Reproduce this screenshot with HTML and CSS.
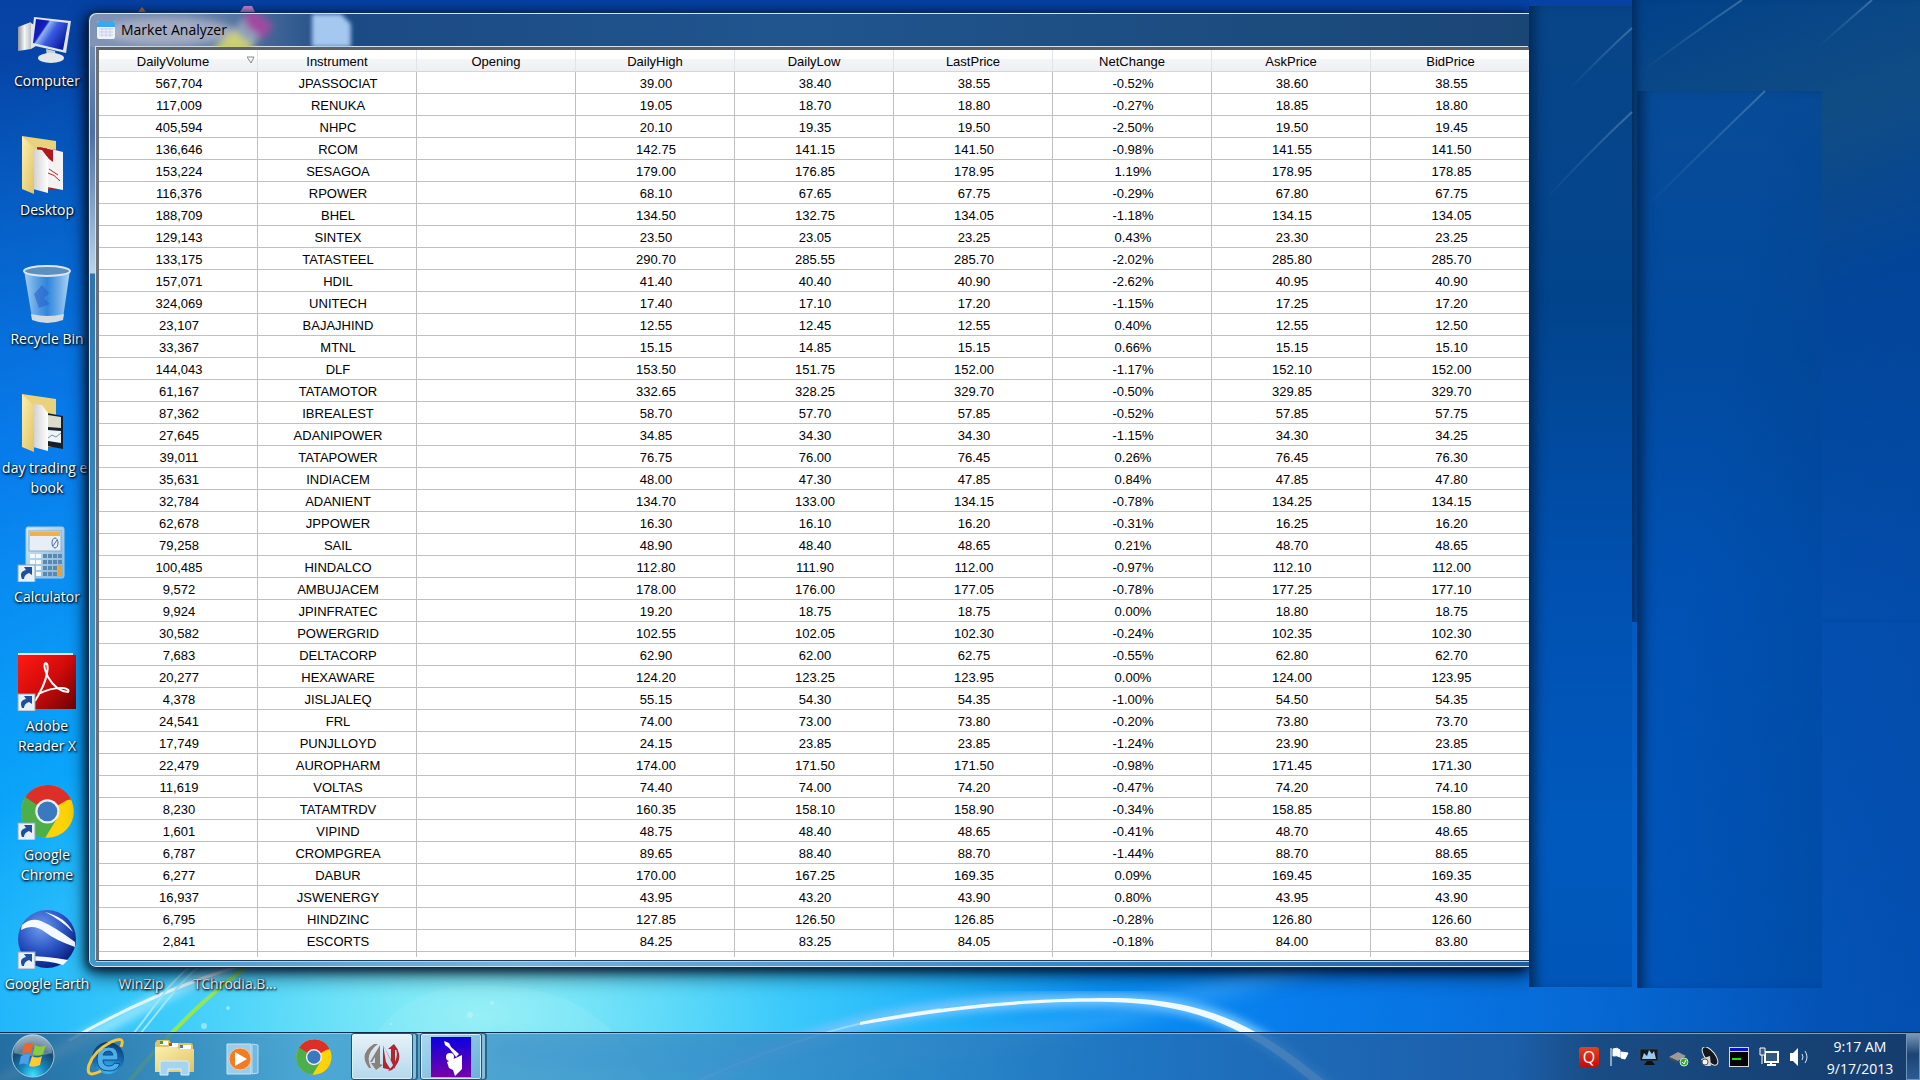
FILE: index.html
```html
<!DOCTYPE html>
<html lang="en">
<head>
  <meta charset="UTF-8">
  <meta name="viewport" content="width=device-width, initial-scale=1.0">
  <title>Market Analyzer</title>
  <link rel="stylesheet" href="styles.css">
</head>
<body>
  <svg class="defs" width="0" height="0" aria-hidden="true">
    <defs>
      <linearGradient id="screen" x1="0" y1="0" x2="1" y2=".6"><stop offset="0" stop-color="#0a12a8"/><stop offset=".35" stop-color="#1420c0"/><stop offset=".4" stop-color="#8fb4f4"/><stop offset=".6" stop-color="#3a5ae0"/><stop offset="1" stop-color="#0b1ca0"/></linearGradient>
      <linearGradient id="metal" x1="0" y1="0" x2="1" y2="0"><stop offset="0" stop-color="#8d949a"/><stop offset=".5" stop-color="#f4f6f7"/><stop offset="1" stop-color="#b9c0c6"/></linearGradient>
      <linearGradient id="manila" x1="0" y1="0" x2="1" y2="1"><stop offset="0" stop-color="#fbf0b0"/><stop offset="1" stop-color="#e2c262"/></linearGradient>
      <linearGradient id="page" x1="0" y1="0" x2="1" y2="0"><stop offset="0" stop-color="#cfcfcf"/><stop offset="1" stop-color="#ffffff"/></linearGradient>
      <linearGradient id="bin" x1="0" y1="0" x2="1" y2="0"><stop offset="0" stop-color="#b9dcf6" stop-opacity=".9"/><stop offset=".5" stop-color="#4b98e0" stop-opacity=".6"/><stop offset="1" stop-color="#cbe6fa" stop-opacity=".9"/></linearGradient>
      <linearGradient id="adobe" x1="0" y1="0" x2="1" y2="1"><stop offset="0" stop-color="#ff1a12"/><stop offset=".5" stop-color="#d20b0b"/><stop offset="1" stop-color="#6e0404"/></linearGradient>
      <linearGradient id="calc" x1="0" y1="0" x2="1" y2="1"><stop offset="0" stop-color="#d4ecf8"/><stop offset="1" stop-color="#7fb2d8"/></linearGradient>
      <radialGradient id="globe" cx=".4" cy=".3" r=".7"><stop offset="0" stop-color="#6e9cf0"/><stop offset=".6" stop-color="#2750c0"/><stop offset="1" stop-color="#0c2380"/></radialGradient>
      <radialGradient id="orb" cx=".5" cy=".95" r=".9"><stop offset="0" stop-color="#38e4ff"/><stop offset=".35" stop-color="#1583bb"/><stop offset=".7" stop-color="#17496f"/><stop offset="1" stop-color="#6f8ea6"/></radialGradient>
      <radialGradient id="ie" cx=".5" cy=".9" r=".9"><stop offset="0" stop-color="#37c4ff"/><stop offset=".6" stop-color="#1465b0"/><stop offset="1" stop-color="#0d3868"/></radialGradient>
      <linearGradient id="ninja" x1="0" y1="0" x2="0" y2="1"><stop offset="0" stop-color="#0a00e0"/><stop offset="1" stop-color="#7800a8"/></linearGradient>
      <linearGradient id="streak" x1="0" y1="1" x2="1" y2="0"><stop offset="0" stop-color="#4a84b4" stop-opacity="0"/><stop offset="1" stop-color="#5a8cb8" stop-opacity=".6"/></linearGradient>
      <filter id="soft"><feGaussianBlur stdDeviation="4"/></filter>
      <filter id="wide"><feGaussianBlur stdDeviation="9"/></filter>
      <g id="shortcut">
        <rect x="1" y="43" width="17" height="17" fill="#e9f1f8" stroke="#8fa6ba"/>
        <path d="M5 57c-2-5-1-8 4-9l-2-3h8v8l-3-2c-3 1-5 3-5 6z" fill="#1f4e9c"/>
      </g>
      <g id="chrome">
        <circle cx="24" cy="24" r="24" fill="#fcd209"/>
        <path d="M24 24L3.200 12A24 24 0 0 1 44.800 12z" fill="#dc2f27"/>
        <path d="M24 0A24 24 0 0 1 45.500 13.500H24z" fill="#dc2f27"/>
        <path d="M3.800 11A24 24 0 0 0 22 48L33 30 24 24z" fill="#4caf4a"/>
        <circle cx="24" cy="24" r="11" fill="#f1f1f1"/>
        <circle cx="24" cy="24" r="9" fill="#3a78c0"/>
      </g>
    </defs>
  </svg>

  <svg class="wallpaper" viewBox="0 0 1920 1080" preserveAspectRatio="none" aria-hidden="true">
    <path d="M350 1080C380 1010 420 985 480 985C560 985 610 1010 645 1080z" fill="#a8f0f8" opacity=".2"/>
    <g fill="none" stroke-linecap="round">
      <path d="M0 1080C110 1030 170 985 250 960" stroke="#8fe4ff" stroke-width="12" filter="url(#soft)"/>
      <path d="M70 1040C130 1005 180 985 250 962" stroke="#dff8ff" stroke-width="3"/>
      <path d="M133 1034C155 1008 165 985 196 962M140 1034C162 1008 180 980 205 962" stroke="#9ce8fb" stroke-width="2"/>
      <path d="M130 1080C180 1020 215 990 255 960" stroke="#8fe85a" stroke-width="4"/>
      <path d="M700 1080C860 1010 960 1000 1110 1000C1220 1000 1270 1040 1330 1090" stroke="#6fc4ff" stroke-width="14" filter="url(#soft)"/>
      <path d="M700 1080C800 1036 860 1020 940 1009" stroke="#8fdcff" stroke-width="2"/>
      <path d="M500 1050C800 1080 1060 1050 1340 950" stroke="#52b4ff" stroke-width="16" opacity=".5" filter="url(#wide)"/>
    </g>
    <path d="M860 1022C960 1002 1050 998 1110 998C1220 998 1270 1036 1336 1090L1322 1090C1260 1038 1210 1004 1110 1002C1050 1001 980 1004 860 1025z" fill="#eefaff"/>
    <g fill="#c4f4fb" opacity=".6">
      <circle cx="204" cy="1026" r="3"/><circle cx="228" cy="1008" r="2"/><circle cx="470" cy="1015" r="3"/><circle cx="492" cy="1003" r="2"/><circle cx="391" cy="1024" r="1"/>
    </g>
  </svg>

  <!-- unpainted strips beside the window -->
  <div class="patch patch-top"></div>
  <div class="patch patch-near"></div>
  <div class="patch patch-far"></div>
  <svg class="streaks" viewBox="0 0 391 260" aria-hidden="true">
    <g fill="none" stroke="url(#streak)" stroke-width="2"><path d="M40 90Q72 56 103 28"/><path d="M16 200Q62 150 103 112"/><path d="M118 206Q175 150 236 91"/><path d="M112 72Q160 36 213 0"/><path d="M289 47L343 0"/></g>
  </svg>

  <nav class="desktop-icons">
    <a href="#" class="shortcut">
      <svg viewBox="0 0 60 60" aria-hidden="true">
        <path d="M1 21l13-5v27L1 45z" fill="url(#metal)"/><path d="M14 17l5 3v20l-5 3z" fill="#e4e7ea"/>
        <path d="M17 11l37 4-5 32-35-8z" fill="#dfe6ec"/><path d="M19 13l32 4-5 27-30-7z" fill="url(#screen)"/>
        <path d="M29 43l9 2 1 6h-9z" fill="#c9d0d6"/><ellipse cx="34" cy="52" rx="13" ry="5" fill="#e2e7eb"/>
      </svg>
      <span>Computer</span>
    </a>
    <a href="#" class="shortcut">
      <svg viewBox="0 0 60 60" aria-hidden="true">
        <path d="M5 1l34 5v48H16z" fill="#ead27c"/>
        <path d="M20 12l20 3v40l-20-3z" fill="#b01820"/><path d="M30 13l16 4v38l-16-3z" fill="#f3f3f1"/><path d="M22 12l14 3v12l-4-3z" fill="#b01820"/><path d="M31 38q6 1 12 8M32 34l9 6" stroke="#c02028" fill="none"/>
        <path d="M16 14l9 1 6 8v35l-15-4z" fill="url(#page)"/><path d="M5 1l12 12v46L5 54z" fill="url(#manila)"/>
      </svg>
      <span>Desktop</span>
    </a>
    <a href="#" class="shortcut">
      <svg viewBox="0 0 60 60" aria-hidden="true">
        <path d="M7 6h46l-7 48q-16 8-31 0z" fill="url(#bin)"/><path d="M17 30l8-9 7 8-5 5 6 6-11 4z" fill="#2a62cc" opacity=".6"/>
        <path d="M14 50l1 6q15 6 31 0l1-6q-16 4-33 0z" fill="#d4dbe0"/><ellipse cx="30" cy="7" rx="23" ry="5" fill="#5c90c0" stroke="#e0e7ec" stroke-width="2"/>
      </svg>
      <span>Recycle Bin</span>
    </a>
    <a href="#" class="shortcut">
      <svg viewBox="0 0 60 60" aria-hidden="true">
        <path d="M5 1l34 5v48H16z" fill="#ead27c"/>
        <path d="M30 20l16 3v33l-16-3z" fill="#16202c"/><path d="M31 22l13 2v11l-13-1z" fill="#dcdccc"/><path d="M31 37l13 1v12l-13-2z" fill="#eef3f8"/><path d="M31 45l4-3 4 2 5-4" stroke="#7890a8" fill="none"/>
        <path d="M16 11l9 1 6 8v38l-15-4z" fill="url(#page)"/><path d="M5 1l12 12v46L5 54z" fill="url(#manila)"/>
      </svg>
      <span>day trading e-<br>book</span>
    </a>
    <a href="#" class="shortcut">
      <svg viewBox="0 0 60 60" aria-hidden="true">
        <rect x="9" y="5" width="38" height="51" rx="2" fill="url(#calc)" stroke="#a6c8de"/><rect x="12" y="9" width="32" height="20" fill="#e6eff6" stroke="#88aac4"/><path d="M13 10h30v4H13z" fill="#f2b04a"/>
        <ellipse cx="38" cy="21" rx="3" ry="5" fill="none" stroke="#4a6ea0" stroke-width="1"/><path d="M36 24l4-6" stroke="#4a6ea0"/>
        <g fill="#f3f8fb"><path d="M13 32h5v4h-5zM19 32h5v4h-5zM13 38h5v4h-5zM19 38h5v4h-5zM19 44h5v4h-5zM19 50h5v4h-5z"/></g>
        <g fill="#5c88b0"><path d="M26 32h4v4h-4zM31 32h4v4h-4zM36 32h4v4h-4zM41 32h4v4h-4zM26 38h4v4h-4zM31 38h4v4h-4zM36 38h4v4h-4zM41 38h4v4h-4zM26 44h4v4h-4zM31 44h4v4h-4zM36 44h4v4h-4zM26 50h4v4h-4zM31 50h4v4h-4zM36 50h4v4h-4z"/></g>
        <path d="M41 43h4v11h-4z" fill="#f0a030"/><use href="#shortcut"/>
      </svg>
      <span>Calculator</span>
    </a>
    <a href="#" class="shortcut">
      <svg viewBox="0 0 60 60" aria-hidden="true">
        <path d="M1 2h55v3H1z" fill="#f0dede"/><rect x="1" y="4" width="58" height="54" fill="url(#adobe)"/>
        <path d="M28 12q4 0 2 10-2 12-12 28M28 12q-2 4 3 14 8 14 20 15 2-3-5-4-10-1-25 6" fill="none" stroke="#fff" stroke-width="2"/><use href="#shortcut"/>
      </svg>
      <span>Adobe<br>Reader X</span>
    </a>
    <a href="#" class="shortcut">
      <svg viewBox="0 0 60 60" aria-hidden="true"><use href="#chrome" transform="translate(4 5) scale(1.1)"/><use href="#shortcut"/></svg>
      <span>Google<br>Chrome</span>
    </a>
    <a href="#" class="shortcut">
      <svg viewBox="0 0 60 60" aria-hidden="true">
        <circle cx="30" cy="30" r="29" fill="url(#globe)"/>
        <path d="M5 16q9-8 19-4 14 6 34 21v5q-20-7-30-15-12-9-24-2zM28 3q20 5 28 20-12-12-28-20zM9 47q20 0 42 4l-5 5q-18-5-32-4z" fill="#f4f8ff"/><use href="#shortcut"/>
      </svg>
      <span>Google Earth</span>
    </a>
    <a href="#" class="shortcut shortcut-last"><span>WinZip</span></a>
    <a href="#" class="shortcut shortcut-last"><span>TChrodia.B...</span></a>
  </nav>

  <svg class="peeking" viewBox="0 0 140 10" aria-hidden="true"><path d="M10 1l4 5H6z" fill="#b86c3c"/><path d="M112 0h8l3 6h-15z" fill="#c888d8"/></svg>

  <main class="window">
    <header class="titlebar">
      <svg class="behind" viewBox="0 0 300 34" aria-hidden="true">
        <g filter="url(#soft)"><ellipse cx="70" cy="18" rx="68" ry="14" fill="#b0b4c6" opacity=".8"/><path d="M114 38l30-28 18 16-8 12z" fill="#ccd070"/><path d="M136 16l14-14 20 16-14 14z" fill="#8ea0bc"/><path d="M148-2h14l16 14-10 14-18-14z" fill="#a04aa0"/></g>
        <path class="sheet" d="M218 0h30l10 10v24h-40z"/>
      </svg>
      <svg class="app-icon" viewBox="0 0 18 18" aria-hidden="true"><rect width="18" height="18" rx="2" fill="#eef3fb"/><path d="M0 2q0-2 2-2h14q2 0 2 2v4H0z" fill="#3aa8f0"/><path d="M2 8h14M2 11h14M2 14h14M5 7v9M9 7v9M13 7v9" stroke="#c9cfe6"/></svg>
      <h1>Market Analyzer</h1>
    </header>
    <div class="content">
      <table class="quotes">
        <thead>
          <tr><th class="sorted">DailyVolume<svg viewBox="0 0 8 8" aria-hidden="true"><path d="M0 1h7L4 7z" fill="none" stroke="#888"/></svg></th><th>Instrument</th><th>Opening</th><th>DailyHigh</th><th>DailyLow</th><th>LastPrice</th><th>NetChange</th><th>AskPrice</th><th>BidPrice</th></tr>
        </thead>
        <tbody>
          <tr><td>567,704</td><td>JPASSOCIAT</td><td></td><td>39.00</td><td>38.40</td><td>38.55</td><td>-0.52%</td><td>38.60</td><td>38.55</td></tr>
          <tr><td>117,009</td><td>RENUKA</td><td></td><td>19.05</td><td>18.70</td><td>18.80</td><td>-0.27%</td><td>18.85</td><td>18.80</td></tr>
          <tr><td>405,594</td><td>NHPC</td><td></td><td>20.10</td><td>19.35</td><td>19.50</td><td>-2.50%</td><td>19.50</td><td>19.45</td></tr>
          <tr><td>136,646</td><td>RCOM</td><td></td><td>142.75</td><td>141.15</td><td>141.50</td><td>-0.98%</td><td>141.55</td><td>141.50</td></tr>
          <tr><td>153,224</td><td>SESAGOA</td><td></td><td>179.00</td><td>176.85</td><td>178.95</td><td>1.19%</td><td>178.95</td><td>178.85</td></tr>
          <tr><td>116,376</td><td>RPOWER</td><td></td><td>68.10</td><td>67.65</td><td>67.75</td><td>-0.29%</td><td>67.80</td><td>67.75</td></tr>
          <tr><td>188,709</td><td>BHEL</td><td></td><td>134.50</td><td>132.75</td><td>134.05</td><td>-1.18%</td><td>134.15</td><td>134.05</td></tr>
          <tr><td>129,143</td><td>SINTEX</td><td></td><td>23.50</td><td>23.05</td><td>23.25</td><td>0.43%</td><td>23.30</td><td>23.25</td></tr>
          <tr><td>133,175</td><td>TATASTEEL</td><td></td><td>290.70</td><td>285.55</td><td>285.70</td><td>-2.02%</td><td>285.80</td><td>285.70</td></tr>
          <tr><td>157,071</td><td>HDIL</td><td></td><td>41.40</td><td>40.40</td><td>40.90</td><td>-2.62%</td><td>40.95</td><td>40.90</td></tr>
          <tr><td>324,069</td><td>UNITECH</td><td></td><td>17.40</td><td>17.10</td><td>17.20</td><td>-1.15%</td><td>17.25</td><td>17.20</td></tr>
          <tr><td>23,107</td><td>BAJAJHIND</td><td></td><td>12.55</td><td>12.45</td><td>12.55</td><td>0.40%</td><td>12.55</td><td>12.50</td></tr>
          <tr><td>33,367</td><td>MTNL</td><td></td><td>15.15</td><td>14.85</td><td>15.15</td><td>0.66%</td><td>15.15</td><td>15.10</td></tr>
          <tr><td>144,043</td><td>DLF</td><td></td><td>153.50</td><td>151.75</td><td>152.00</td><td>-1.17%</td><td>152.10</td><td>152.00</td></tr>
          <tr><td>61,167</td><td>TATAMOTOR</td><td></td><td>332.65</td><td>328.25</td><td>329.70</td><td>-0.50%</td><td>329.85</td><td>329.70</td></tr>
          <tr><td>87,362</td><td>IBREALEST</td><td></td><td>58.70</td><td>57.70</td><td>57.85</td><td>-0.52%</td><td>57.85</td><td>57.75</td></tr>
          <tr><td>27,645</td><td>ADANIPOWER</td><td></td><td>34.85</td><td>34.30</td><td>34.30</td><td>-1.15%</td><td>34.30</td><td>34.25</td></tr>
          <tr><td>39,011</td><td>TATAPOWER</td><td></td><td>76.75</td><td>76.00</td><td>76.45</td><td>0.26%</td><td>76.45</td><td>76.30</td></tr>
          <tr><td>35,631</td><td>INDIACEM</td><td></td><td>48.00</td><td>47.30</td><td>47.85</td><td>0.84%</td><td>47.85</td><td>47.80</td></tr>
          <tr><td>32,784</td><td>ADANIENT</td><td></td><td>134.70</td><td>133.00</td><td>134.15</td><td>-0.78%</td><td>134.25</td><td>134.15</td></tr>
          <tr><td>62,678</td><td>JPPOWER</td><td></td><td>16.30</td><td>16.10</td><td>16.20</td><td>-0.31%</td><td>16.25</td><td>16.20</td></tr>
          <tr><td>79,258</td><td>SAIL</td><td></td><td>48.90</td><td>48.40</td><td>48.65</td><td>0.21%</td><td>48.70</td><td>48.65</td></tr>
          <tr><td>100,485</td><td>HINDALCO</td><td></td><td>112.80</td><td>111.90</td><td>112.00</td><td>-0.97%</td><td>112.10</td><td>112.00</td></tr>
          <tr><td>9,572</td><td>AMBUJACEM</td><td></td><td>178.00</td><td>176.00</td><td>177.05</td><td>-0.78%</td><td>177.25</td><td>177.10</td></tr>
          <tr><td>9,924</td><td>JPINFRATEC</td><td></td><td>19.20</td><td>18.75</td><td>18.75</td><td>0.00%</td><td>18.80</td><td>18.75</td></tr>
          <tr><td>30,582</td><td>POWERGRID</td><td></td><td>102.55</td><td>102.05</td><td>102.30</td><td>-0.24%</td><td>102.35</td><td>102.30</td></tr>
          <tr><td>7,683</td><td>DELTACORP</td><td></td><td>62.90</td><td>62.00</td><td>62.75</td><td>-0.55%</td><td>62.80</td><td>62.70</td></tr>
          <tr><td>20,277</td><td>HEXAWARE</td><td></td><td>124.20</td><td>123.25</td><td>123.95</td><td>0.00%</td><td>124.00</td><td>123.95</td></tr>
          <tr><td>4,378</td><td>JISLJALEQ</td><td></td><td>55.15</td><td>54.30</td><td>54.35</td><td>-1.00%</td><td>54.50</td><td>54.35</td></tr>
          <tr><td>24,541</td><td>FRL</td><td></td><td>74.00</td><td>73.00</td><td>73.80</td><td>-0.20%</td><td>73.80</td><td>73.70</td></tr>
          <tr><td>17,749</td><td>PUNJLLOYD</td><td></td><td>24.15</td><td>23.85</td><td>23.85</td><td>-1.24%</td><td>23.90</td><td>23.85</td></tr>
          <tr><td>22,479</td><td>AUROPHARM</td><td></td><td>174.00</td><td>171.50</td><td>171.50</td><td>-0.98%</td><td>171.45</td><td>171.30</td></tr>
          <tr><td>11,619</td><td>VOLTAS</td><td></td><td>74.40</td><td>74.00</td><td>74.20</td><td>-0.47%</td><td>74.20</td><td>74.10</td></tr>
          <tr><td>8,230</td><td>TATAMTRDV</td><td></td><td>160.35</td><td>158.10</td><td>158.90</td><td>-0.34%</td><td>158.85</td><td>158.80</td></tr>
          <tr><td>1,601</td><td>VIPIND</td><td></td><td>48.75</td><td>48.40</td><td>48.65</td><td>-0.41%</td><td>48.70</td><td>48.65</td></tr>
          <tr><td>6,787</td><td>CROMPGREA</td><td></td><td>89.65</td><td>88.40</td><td>88.70</td><td>-1.44%</td><td>88.70</td><td>88.65</td></tr>
          <tr><td>6,277</td><td>DABUR</td><td></td><td>170.00</td><td>167.25</td><td>169.35</td><td>0.09%</td><td>169.45</td><td>169.35</td></tr>
          <tr><td>16,937</td><td>JSWENERGY</td><td></td><td>43.95</td><td>43.20</td><td>43.90</td><td>0.80%</td><td>43.95</td><td>43.90</td></tr>
          <tr><td>6,795</td><td>HINDZINC</td><td></td><td>127.85</td><td>126.50</td><td>126.85</td><td>-0.28%</td><td>126.80</td><td>126.60</td></tr>
          <tr><td>2,841</td><td>ESCORTS</td><td></td><td>84.25</td><td>83.25</td><td>84.05</td><td>-0.18%</td><td>84.00</td><td>83.80</td></tr>
          <tr class="cut"><td></td><td></td><td></td><td></td><td></td><td></td><td></td><td></td><td></td></tr>
        </tbody>
      </table>
    </div>
  </main>

  <footer class="taskbar">
    <button class="start" aria-label="Start">
      <svg viewBox="0 0 44 44" aria-hidden="true"><circle cx="22" cy="22" r="21" fill="url(#orb)" stroke="#9cc8e2"/><path d="M3 19a19 19 0 0 1 38 0q-18 6-38 0z" fill="#fff" opacity=".3"/>
        <path d="M13 11q5-4 9-1l-2 9q-5-2-9 1z" fill="#f0642c"/><path d="M24 11q5 3 11 0l-3 9q-5 3-10 0z" fill="#8ccc3c"/><path d="M10 22q5-3 9-1l-2 10q-5-3-9 0z" fill="#4aa0ec"/><path d="M21 22q5 3 10 0l-2 9q-6 3-11 1z" fill="#ffc930"/></svg>
    </button>
    <div class="tasks">
      <button class="task" aria-label="Internet Explorer">
        <svg viewBox="0 0 40 40" aria-hidden="true"><circle cx="22" cy="21" r="16" fill="url(#ie)"/><path d="M32 23H17q0 6 6 6 4 0 6-3l5 1q-3 7-11 7-12 0-12-12t12-12q10 0 9 13zM17 18h10q-1-4-4-4-5 0-6 4z" fill="#4eaeea" stroke="#0f4c88"/><path d="M35 10q5-12-10-5Q8 14 3 28q-4 14 12 6" fill="none" stroke="#f2c63c" stroke-width="3"/></svg>
      </button>
      <button class="task" aria-label="Windows Explorer">
        <svg viewBox="0 0 40 40" aria-hidden="true"><path d="M2 3h12l2 3h19q3 0 3 3v25H0V6z" fill="#e0c462"/><path d="M5 4h8v4H5zM14 6h9v4h-9zM25 8h11v4H25z" fill="#fff"/><path d="M5 4h3v3H5z" fill="#3c9c4c"/><path d="M14 6h3v3h-3z" fill="#d04030"/><path d="M25 8h3v3h-3z" fill="#3c80c8"/><path d="M0 10h22l2 2h15v23H0z" fill="url(#manila)"/><path d="M5 38V26q0-2 2-2h25q2 0 2 2v12h-8v-6H13v6z" fill="#a4d4f0" stroke="#d8f0fc"/></svg>
      </button>
      <button class="task" aria-label="Media Player">
        <svg viewBox="0 0 40 40" aria-hidden="true"><path d="M28 7l6 1v28l-6 1z" fill="#72b8e0" stroke="#b8e0f4"/><path d="M3 7h24v30H3z" fill="#9ccdea" stroke="#c4e6f6"/><circle cx="16" cy="22" r="11" fill="#f07c24" stroke="#f9c9a0"/><path d="M11 15l12 7-12 7z" fill="#fff"/></svg>
      </button>
      <button class="task" aria-label="Google Chrome">
        <svg viewBox="0 0 48 48" aria-hidden="true"><use href="#chrome" transform="translate(4 3) scale(.88)"/></svg>
      </button>
      <button class="task open active" aria-label="Market Analyzer">
        <svg viewBox="0 0 40 40" aria-hidden="true"><path d="M7 31Q-4 17 12 7l4 0Q2 17 9 31z" fill="#8d8078"/><path d="M8 25L18 8v19l3 1-7 5-5-7h4v-6l-3 5z" fill="#8d8078"/><path d="M21 8l8 15V12h-3l6-5 4 6-3 0v19z" fill="#b02630"/><path d="M21 8v23l8 2-5-8z" fill="#b02630"/><path d="M33 9q10 12-3 24l-4 1q13-12 7-25z" fill="#b02630"/></svg>
      </button>
      <button class="task open" aria-label="NinjaTrader">
        <svg viewBox="0 0 40 40" aria-hidden="true"><path d="M0 0h40v40H0z" fill="url(#ninja)"/><path d="M13 4l5 2 2 4 8 7-3 3-7-9-4-3z" fill="#fff"/><circle cx="19" cy="20" r="4" fill="#fff"/><path d="M16 25l15-7v14l-7 7-2-6-4-2z" fill="#fff"/></svg>
      </button>
    </div>
    <div class="tray">
      <span class="quick">Q</span>
      <svg viewBox="0 0 20 20" aria-hidden="true"><path d="M2 1v18M4 2q4-2 7 1v7q-3-2-7-1zM12 5l7 1-3 6-4-1z" fill="#fff" stroke="#fff"/></svg>
      <svg viewBox="0 0 20 20" aria-hidden="true"><path d="M1 2h18v12H1z" fill="#101820" stroke="#34485c"/><path d="M3 12l2-6 3 3 2-6 3 4 2-3 2 8z" fill="#9cc8f0"/><path d="M5 18h11l-3-4H8z" fill="#0c1014"/></svg>
      <svg viewBox="0 0 20 20" aria-hidden="true"><path d="M0 10l9-5 8 4-8 5z" fill="#9a9a9a"/><path d="M0 10l9 4v2l-9-4z" fill="#4c4c4c"/><circle cx="15" cy="15" r="4" fill="#38a838" stroke="#c4e8c4"/><path d="M13 15l2 2 2-4" fill="none" stroke="#fff"/></svg>
      <svg viewBox="0 0 20 20" aria-hidden="true"><ellipse cx="11" cy="9" rx="5" ry="11" transform="rotate(-38 11 9)" fill="#14181c" stroke="#e4e4e4"/><path d="M11 9L2 12l4 7h6z" fill="#d4d4d4"/><circle cx="6" cy="15" r="3" fill="#f4f4f4" stroke="#555"/></svg>
      <svg viewBox="0 0 20 20" aria-hidden="true"><path d="M0 0h20v20H0z" fill="#d8d8d8"/><path d="M1 1h18v3H1z" fill="#1010c8"/><path d="M1 5h18v14H1z" fill="#050505"/><path d="M3 12h9" stroke="#18e018" stroke-width="2"/></svg>
      <svg viewBox="0 0 20 20" aria-hidden="true"><path d="M6 5h13v10H6z" fill="#345880" stroke="#fff" stroke-width="2"/><path d="M8 18h9M12 15v3" stroke="#fff" stroke-width="2"/><path d="M1 1h5v7H1zM3 8v9" fill="#345880" stroke="#fff"/></svg>
      <svg viewBox="0 0 20 20" aria-hidden="true"><path d="M1 6h3l5-5v18l-5-5H1z" fill="#fff"/><path d="M13 7q2 3 0 6M16 4q4 6 0 12" fill="none" stroke="#d4e4f4"/></svg>
      <div class="clock">9:17 AM<br>9/17/2013</div>
      <button class="show-desktop" aria-label="Show desktop"></button>
    </div>
  </footer>
</body>
</html>
```
FILE: styles.css
```css
* {
  box-sizing: border-box;
}
body {
  margin: 0;
  height: 100vh;
  overflow: hidden;
  position: relative;
  font-family: "Open Sans", "Noto Sans", sans-serif;
  font-size: 14px;
  background:
    radial-gradient(ellipse 620px 320px at 25% 94%, rgba(160, 245, 245, 0.9), rgba(90, 220, 250, 0.6) 50%, rgba(50, 190, 250, 0) 100%),
    radial-gradient(ellipse 1400px 980px at 22% 92%, #18c4fc 0%, #0aa4fa 35%, #087cec 62%, rgba(2, 92, 208, 0) 100%),
    linear-gradient(100deg, transparent 75%, rgba(0, 50, 130, 0.35) 100%),
    linear-gradient(#0642a4 0%, #0453b4 35%, #0560cc 100%);
}
button {
  border: 0;
  padding: 0;
  background: none;
  font: inherit;
}
.defs {
  position: absolute;
}
.wallpaper {
  position: absolute;
  inset: 0;
  width: 100%;
  height: 100%;
}

/* strips to the right of the window */
.patch {
  position: absolute;
}
.patch-top {
  top: 0;
  right: 0;
  width: 288px;
  height: 622px;
  background: linear-gradient(160deg, #02418a, #104c84 25%, rgba(2, 68, 150, 0.8) 50%, rgba(2, 76, 170, 0));
  box-shadow: inset 10px 0 10px -6px #022a58;
}
.patch-near {
  top: 6px;
  right: 288px;
  width: 103px;
  height: 981px;
  background: linear-gradient(#084588, #02448c 30%, #0050b0 58%, #005abe 85%, #0056b8);
  box-shadow: inset 12px 0 12px -6px #022a58;
}
.patch-far {
  top: 91px;
  right: 98px;
  width: 185px;
  height: 897px;
  background: linear-gradient(100deg, rgba(0, 84, 190, 0.3) 40%, rgba(0, 60, 140, 0.4)), linear-gradient(#0a4786, #024692 30%, #0050ae 55%, #0058bc);
  box-shadow: inset 12px 0 12px -6px #022a58;
}
.streaks {
  position: absolute;
  top: 0;
  right: 0;
  width: 391px;
  height: 260px;
}

/* desktop shortcuts */
.desktop-icons {
  position: absolute;
  top: 0;
  left: 0;
  display: grid;
  grid-template-rows: repeat(8, 129px);
  grid-auto-flow: column;
  grid-auto-columns: 94px;
}
.shortcut {
  display: flex;
  flex-direction: column;
  align-items: center;
  padding-top: 6px;
  color: #fff;
  line-height: 20px;
  text-align: center;
  text-decoration: none;
  white-space: nowrap;
  text-shadow: 1px 1px 2px #000, 0 1px 3px #001c3c;
}
.shortcut svg {
  width: 60px;
  height: 60px;
  margin-bottom: 5px;
}
.shortcut-last {
  grid-row: 8;
  padding-top: 71px;
}
.peeking {
  position: absolute;
  top: 6px;
  left: 132px;
  width: 140px;
}

/* window */
.window {
  position: absolute;
  top: 12px;
  left: 88px;
  right: 391px;
  padding: 0 0 6px 7px;
  border: 1px solid #12304e;
  border-right: 0;
  border-radius: 8px 0 0 8px;
  background:
    linear-gradient(90deg, #8095b6, #6d87ae 100px, #1c4a84 250px, #20558e 700px, #1a4676) top / 100% 34px no-repeat,
    linear-gradient(#7f93b5 0, #4a70a8 120px, #b9d3ea 260px, #2c74b4 261px, #3a8cca 600px, #4296c8) left / 8px 100% no-repeat,
    linear-gradient(90deg, #4296c8, #76b4dc 30%, #3484c4 70%, #1f5c9c);
  box-shadow: inset 1px 1px 0 #cfe2f2, inset 0 -1px 0 #cfe2f2, -2px 2px 10px rgba(0, 10, 30, 0.8), 0 6px 20px rgba(0, 10, 30, 0.8);
  clip-path: inset(-40px 0 -40px -40px);
}
.titlebar {
  position: relative;
  display: flex;
  align-items: center;
  gap: 6px;
  height: 34px;
  padding-left: 1px;
}
.titlebar h1 {
  position: relative;
  margin: 0;
  font-size: 14px;
  font-weight: normal;
  line-height: 20px;
  color: #000;
}
.app-icon {
  position: relative;
  width: 18px;
  height: 18px;
}
.behind {
  position: absolute;
  top: 1px;
  left: 0;
  width: 300px;
  height: 33px;
}
.sheet {
  fill: #a4c8f0;
  filter: blur(2px);
}
.content {
  border-top: 3px solid #5c6268;
  border-left: 3px solid #6c7074;
  border-bottom: 1px solid #1d3c5c;
  padding-bottom: 3px;
  background: #fff;
  box-shadow: -1px -1px 0 #d4e0ea, 0 1px 0 #b4d2ea;
}

/* quotes */
.quotes {
  width: calc(100% + 1px);
  table-layout: fixed;
  border-spacing: 0;
  font-family: "Liberation Sans", Arial, sans-serif;
  font-size: 13px;
  line-height: 19px;
  text-align: center;
  color: #000;
}
.quotes th {
  height: 22px;
  padding: 2px 0 0;
  font-weight: normal;
  background: linear-gradient(#fff 40%, #f4f5f7 45%, #eeeff2);
  border-bottom: 1px solid #d6d6d6;
  border-right: 1px solid #e0e3e8;
}
.quotes td {
  height: 22px;
  padding: 2px 0 0 2px;
  border-bottom: 1px solid #c0c0c0;
  border-right: 1px solid #c0c0c0;
}
.quotes th:last-child,
.quotes td:last-child {
  border-right: 0;
}
.quotes .cut td {
  height: 5px;
  border-bottom: 0;
}
.sorted svg {
  float: right;
  width: 8px;
  height: 8px;
  margin: 4px 2px 0 0;
}

/* taskbar */
.taskbar {
  position: absolute;
  left: 0;
  right: 0;
  bottom: 0;
  display: flex;
  height: 48px;
  border-top: 1px solid #0c2c4c;
  background: linear-gradient(90deg, rgba(36, 92, 140, 0.8), rgba(70, 150, 200, 0.75) 16%, rgba(54, 140, 196, 0.8) 35%, rgba(36, 110, 180, 0.8) 60%, rgba(30, 92, 164, 0.9) 79%, #194c84 83%, #153c6c);
  box-shadow: inset 0 1px 0 rgba(190, 225, 250, 0.6);
}
.start {
  width: 44px;
  height: 44px;
  margin: 1px 20px 0 11px;
}
.tasks {
  display: flex;
  gap: 7px;
}
.task {
  width: 62px;
  display: flex;
  align-items: center;
  justify-content: center;
}
.task svg {
  width: 40px;
  height: 40px;
}
.open {
  border: 1px solid #24506e;
  border-radius: 3px;
  background: linear-gradient(135deg, rgba(210, 236, 250, 0.7), rgba(130, 190, 224, 0.5));
  box-shadow: inset 0 0 0 1px rgba(230, 246, 255, 0.8), 4px 0 0 -1px #84bede, 5px 0 0 #2c6488;
}
.active {
  background: linear-gradient(#e6f2f9, #b4d8ec);
}
.tray {
  display: flex;
  align-items: center;
  gap: 10px;
  margin-left: auto;
  color: #fff;
}
.tray svg {
  width: 20px;
  height: 20px;
}
.quick {
  width: 20px;
  border-radius: 3px;
  background: linear-gradient(#e84020, #c40c08);
  font-size: 16px;
  line-height: 20px;
  text-align: center;
}
.clock {
  width: 76px;
  margin-left: 3px;
  padding-top: 2px;
  line-height: 22px;
  text-align: center;
}
.show-desktop {
  align-self: stretch;
  width: 14px;
  margin-left: -2px;
  border: 1px solid #6f93b8;
  background: linear-gradient(#7a98b8, #1c4474 45%, #2c5c94);
}
```
